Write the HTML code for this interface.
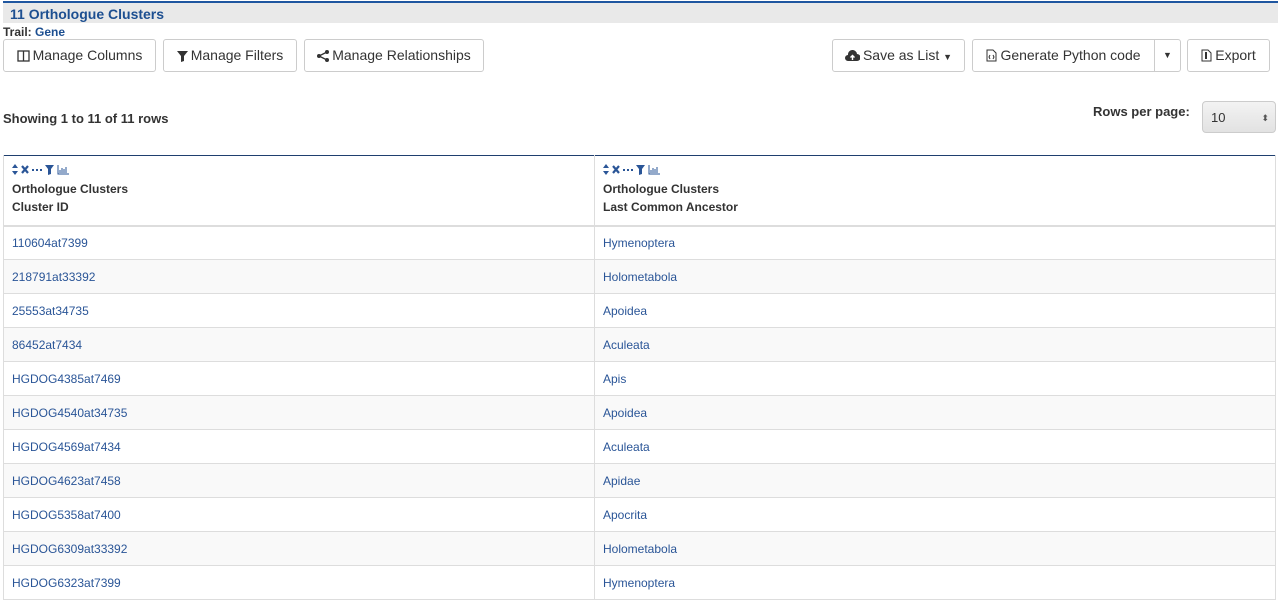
<!DOCTYPE html><html><head><style>
body{margin:0;width:1281px;height:605px;overflow:hidden;background:#fff;font-family:"Liberation Sans",sans-serif;color:#333;font-size:12px;position:relative}
.hdr{position:absolute;left:3px;top:1px;width:1275px;height:22px;background:#e9e9e9;border-top:2px solid #1f56a0;box-sizing:border-box}
.hdr span{position:absolute;left:7px;top:3px;font-size:14px;font-weight:bold;color:#1d4f91}
.trail{position:absolute;left:3px;top:25px;font-weight:bold;font-size:12px}
.trail b{color:#1d4f91}
.btn{position:absolute;top:39px;height:33px;border:1px solid #ccc;border-radius:3px;box-sizing:border-box;font-size:14px;color:#333;line-height:31px;text-align:center;background:#fff;white-space:nowrap}
.btn svg{vertical-align:-2px;margin-right:3px}
.a{position:absolute;font-size:13px;font-weight:bold}
table{position:absolute;left:3px;top:155px;width:1273px;border-collapse:collapse;border-top:1px solid #1f3f6f}
th{text-align:left;vertical-align:top;font-size:12px;font-weight:bold;height:70px;border-left:1px solid #ddd;border-right:1px solid #ddd;border-bottom:2px solid #ddd;padding:8px 8px 0;box-sizing:border-box}
td{height:34px;box-sizing:border-box;border:1px solid #ddd;padding:0 8px;color:#2a5597;font-size:12px}
tr:nth-child(odd) td{background:#f9f9f9}
.ic{height:16px}
th div.t{line-height:18px}
</style></head><body>
<div class="hdr"><span>11 Orthologue Clusters</span></div>
<div class="trail">Trail: <b>Gene</b></div>
<div class="btn" style="left:3px;width:153px"><svg width="13" height="12"><rect x="1" y="1" width="11" height="10" fill="none" stroke="#333" stroke-width="1.3"/><line x1="6.5" y1="1" x2="6.5" y2="11" stroke="#333" stroke-width="1.3"/></svg>Manage Columns</div>
<div class="btn" style="left:163px;width:134px"><svg width="11" height="12"><path d="M0 1H11L7 6V11L4 12V6Z" fill="#333"/></svg>Manage Filters</div>
<div class="btn" style="left:304px;width:180px"><svg width="12" height="12"><circle cx="10" cy="2" r="2" fill="#333"/><circle cx="2" cy="6" r="2" fill="#333"/><circle cx="10" cy="10" r="2" fill="#333"/><path d="M10 2L2 6L10 10" stroke="#333" fill="none" stroke-width="1.3"/></svg>Manage Relationships</div>
<div class="btn" style="left:832px;width:133px"><svg width="15" height="12"><path d="M3 11A3 3 0 0 1 3 5A4.5 4.5 0 0 1 12 4A3.5 3.5 0 0 1 12 11Z" fill="#333"/><path d="M7.5 10V6M5.5 7.5L7.5 5.5L9.5 7.5" stroke="#fff" fill="none" stroke-width="1.4"/></svg>Save as List <span style="font-size:9px">▼</span></div>
<div class="btn" style="left:972px;width:183px;border-radius:3px 0 0 3px"><svg width="11" height="13"><path d="M1 1H7L10 4V12H1Z" fill="none" stroke="#333"/><path d="M4 6L3 8L4 10M7 6L8 8L7 10" stroke="#333" fill="none"/></svg>Generate Python code</div>
<div class="btn" style="left:1154px;width:27px;border-radius:0 3px 3px 0;font-size:9px">▼</div>
<div class="btn" style="left:1187px;width:83px"><svg width="11" height="13"><path d="M1 1H7L10 4V12H1Z" fill="none" stroke="#333"/><rect x="4" y="3" width="2" height="7" fill="#333"/></svg>Export</div>
<div class="a" style="left:3px;top:111px">Showing 1 to 11 of 11 rows</div>
<div class="a" style="left:1093px;top:104px">Rows per page:</div>
<div style="position:absolute;left:1202px;top:101px;width:74px;height:32px;border:1px solid #ccc;border-radius:4px;background:linear-gradient(#f3f3f3,#e2e2e2);box-sizing:border-box;font-size:13px;line-height:32px;padding-left:8px">10<span style="position:absolute;right:6px;font-size:9px;color:#555">⬍</span></div>
<table>
<tr><th style="width:591px"><div class="ic"><svg width="70" height="11"><path d="M3 0L6 4H0ZM3 11L6 7H0Z" fill="#2a5597"/><path d="M10 2L16 9M16 2L10 9" stroke="#2a5597" stroke-width="2.2"/><rect x="20" y="5" width="2" height="2" fill="#2a5597"/><rect x="24" y="5" width="2" height="2" fill="#2a5597"/><rect x="28" y="5" width="2" height="2" fill="#2a5597"/><path d="M33 1H42L39 5V10L36 11V5Z" fill="#2a5597"/><path d="M46 1V10H57M48 9V6M50 9V4M52 9V5M54 9V3" stroke="#2a5597" fill="none"/></svg></div><div class="t">Orthologue Clusters<br>Cluster ID</div></th><th><div class="ic"><svg width="70" height="11"><path d="M3 0L6 4H0ZM3 11L6 7H0Z" fill="#2a5597"/><path d="M10 2L16 9M16 2L10 9" stroke="#2a5597" stroke-width="2.2"/><rect x="20" y="5" width="2" height="2" fill="#2a5597"/><rect x="24" y="5" width="2" height="2" fill="#2a5597"/><rect x="28" y="5" width="2" height="2" fill="#2a5597"/><path d="M33 1H42L39 5V10L36 11V5Z" fill="#2a5597"/><path d="M46 1V10H57M48 9V6M50 9V4M52 9V5M54 9V3" stroke="#2a5597" fill="none"/></svg></div><div class="t">Orthologue Clusters<br>Last Common Ancestor</div></th></tr>
<tr><td>110604at7399</td><td>Hymenoptera</td></tr>
<tr><td>218791at33392</td><td>Holometabola</td></tr>
<tr><td>25553at34735</td><td>Apoidea</td></tr>
<tr><td>86452at7434</td><td>Aculeata</td></tr>
<tr><td>HGDOG4385at7469</td><td>Apis</td></tr>
<tr><td>HGDOG4540at34735</td><td>Apoidea</td></tr>
<tr><td>HGDOG4569at7434</td><td>Aculeata</td></tr>
<tr><td>HGDOG4623at7458</td><td>Apidae</td></tr>
<tr><td>HGDOG5358at7400</td><td>Apocrita</td></tr>
<tr><td>HGDOG6309at33392</td><td>Holometabola</td></tr>
<tr><td>HGDOG6323at7399</td><td>Hymenoptera</td></tr>
</table>
</body></html>
